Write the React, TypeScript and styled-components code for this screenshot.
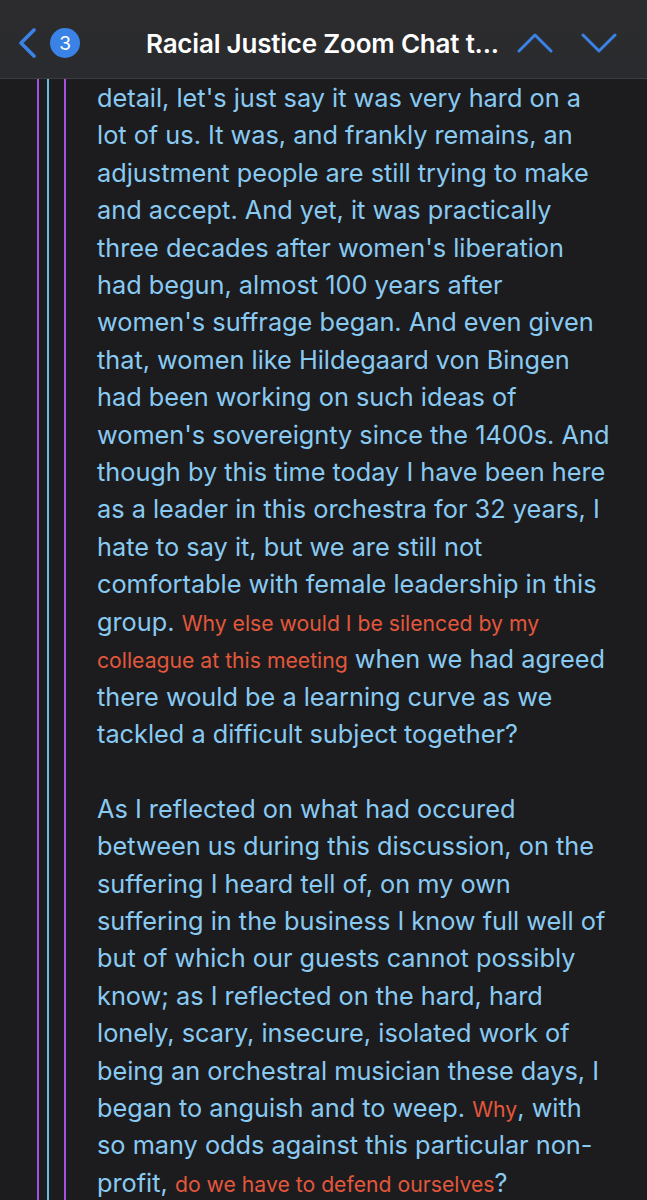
import React from "react";
import styled, { createGlobalStyle } from "styled-components";

const GlobalStyle = createGlobalStyle`
  html, body {
    margin: 0;
    padding: 0;
    background: #1c1c1e;
  }
  body {
    font-family: Inter, "Noto Sans", "Liberation Sans", sans-serif;
    -webkit-font-smoothing: antialiased;
  }
`;

const paragraphs: Array<Array<[string, boolean]>> = [
  [
    [
      "detail, let's just say it was very hard on a lot of us. It was, and frankly remains, an adjustment people are still trying to make and accept. And yet, it was practically three decades after women's liberation had begun, almost 100 years after women's suffrage began. And even given that, women like Hildegaard von Bingen had been working on such ideas of women's sovereignty since the 1400s. And though by this time today I have been here as a leader in this orchestra for 32 years, I hate to say it, but we are still not comfortable with female leadership in this group. ",
      false,
    ],
    ["Why else would I be silenced by my colleague at this meeting", true],
    [
      " when we had agreed there would be a learning curve as we tackled a difficult subject together?",
      false,
    ],
  ],
  [
    [
      "As I reflected on what had occured between us during this discussion, on the suffering I heard tell of, on my own suffering in the business I know full well of but of which our guests cannot possibly know; as I reflected on the hard, hard lonely, scary, insecure, isolated work of being an orchestral musician these days, I began to anguish and to weep. ",
      false,
    ],
    ["Why", true],
    [", with so many odds against this particular non-profit, ", false],
    ["do we have to defend ourselves", true],
    ["?", false],
  ],
];

function App() {
  return (
    <Screen>
      <GlobalStyle />
      <NavBar>
        <BackGroup>
          <svg width="22" height="30" viewBox="0 0 22 30">
            <path
              d="M17 2 L4 15 L17 28"
              fill="none"
              stroke="#3b82e6"
              strokeWidth="3.6"
              strokeLinecap="round"
              strokeLinejoin="round"
            />
          </svg>
          <Badge>3</Badge>
        </BackGroup>
        <Title>Racial Justice Zoom Chat t...</Title>
        <Arrows>
          <svg width="36" height="22" viewBox="0 0 36 22">
            <path
              d="M2 19 L18 3 L34 19"
              fill="none"
              stroke="#3b82e6"
              strokeWidth="3"
              strokeLinecap="round"
              strokeLinejoin="round"
            />
          </svg>
          <svg width="36" height="22" viewBox="0 0 36 22">
            <path
              d="M2 3 L18 19 L34 3"
              fill="none"
              stroke="#3b82e6"
              strokeWidth="3"
              strokeLinecap="round"
              strokeLinejoin="round"
            />
          </svg>
        </Arrows>
      </NavBar>
      <Thread>
        <Gutter>
          <Rule color="#a450e0" />
          <Rule color="#6cb8e8" gap={8} />
          <Rule color="#a450e0" gap={15} />
        </Gutter>
        <Body>
          {paragraphs.map((p, i) => (
            <Para key={i}>
              {p.map(([text, red], j) =>
                red ? <Quote key={j}>{text}</Quote> : <span key={j}>{text}</span>
              )}
            </Para>
          ))}
        </Body>
      </Thread>
    </Screen>
  );
}

const Screen = styled.div`
  width: 647px;
  height: 1200px;
  overflow: hidden;
  background: #1c1c1e;
  display: flex;
  flex-direction: column;
`;

const NavBar = styled.header`
  flex: 0 0 79px;
  display: flex;
  align-items: center;
  padding: 8px 30px 0 17px;
  background: linear-gradient(180deg, #2c2c2e 0%, #2a2b2e 100%);
  border-bottom: 1px solid #3d3e41;
  box-sizing: border-box;
  height: 79px;
`;

const BackGroup = styled.div`
  display: flex;
  align-items: center;
  gap: 11px;
`;

const Badge = styled.span`
  width: 30px;
  height: 30px;
  border-radius: 50%;
  background: #3b82e6;
  color: #fff;
  font-size: 19px;
  display: flex;
  align-items: center;
  justify-content: center;
`;

const Title = styled.h1`
  margin: 0 0 0 66px;
  flex: 1;
  color: #fff;
  font-size: 26px;
  font-weight: 600;
  letter-spacing: -0.2px;
  white-space: nowrap;
`;

const Arrows = styled.div`
  display: flex;
  align-items: center;
  gap: 28px;
`;

const Thread = styled.main`
  flex: 1;
  display: flex;
`;

const Gutter = styled.div`
  flex: 0 0 97px;
  display: flex;
  padding-left: 37px;
  box-sizing: border-box;
`;

const Rule = styled.div<{ color: string; gap?: number }>`
  width: 2px;
  margin-left: ${(p) => p.gap ?? 0}px;
  background: ${(p) => p.color};
`;

const Body = styled.div`
  width: 518px;
  color: #89caf2;
  font-size: 25.3px;
  line-height: 37.4px;
`;

const Para = styled.p`
  margin: 0 0 37.4px;
`;

const Quote = styled.span`
  color: #e3573c;
  font-size: 21.2px;
  line-height: 1;
`;

export default App;
